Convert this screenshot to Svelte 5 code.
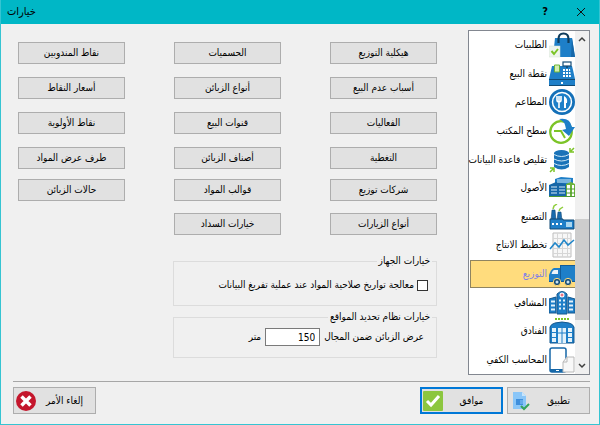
<script lang="ts">
  // Options dialog: section list on the right, distribution settings beside it.
  const sections = [
    { id: "orders", label: "الطلبيات" },
    { id: "pos", label: "نقطة البيع" },
    { id: "restaurants", label: "المطاعم" },
    { id: "desktop", label: "سطح المكتب" },
    { id: "database", label: "تقليص قاعدة البيانات" },
    { id: "assets", label: "الأصول" },
    { id: "manufacturing", label: "التصنيع" },
    { id: "planning", label: "تخطيط الانتاج" },
    { id: "distribution", label: "التوزيع" },
    { id: "hospitals", label: "المشافي" },
    { id: "hotels", label: "الفنادق" },
    { id: "pocket", label: "المحاسب الكفي" },
  ];

  // one array per column, first column is the rightmost
  const columns = [
    ["هيكلية التوزيع", "أسباب عدم البيع", "الفعاليات", "التغطية", "شركات توزيع", "أنواع الزيارات"],
    ["الحسميات", "أنواع الزبائن", "قنوات البيع", "أصناف الزبائن", "قوالب المواد", "خيارات السداد"],
    ["نقاط المندوبين", "أسعار النقاط", "نقاط الأولوية", "طرف عرض المواد", "حالات الزبائن"],
  ];

  let selected = $state("distribution");
  let fixDates = $state(false);
  let range = $state("150");
</script>

{#snippet icon(id: string)}
  <svg class="icon" viewBox="0 0 26 26" aria-hidden="true">
    {#if id === "orders"}
      <path d="M6 6h17l3 19H4z" fill="#1e7fc8" />
      <path d="M23 6l3 19h-4z" fill="#1667a8" />
      <path d="M9.500 11V7q0-5.500 5-5.500t5 5.500v4" fill="none" stroke="#103c5c" stroke-width="2.200" />
      <rect y="14" width="11" height="11" fill="#eef5ee" stroke="#d5e3d5" stroke-width="0.500" />
      <path d="M2.500 19l2.500 3 4-5" fill="none" stroke="#7cc427" stroke-width="2" />
    {:else if id === "pos"}
      <path d="M3 5h20l1 4 2 9v7H0v-7z" fill="#1e7fc8" />
      <rect x="14" y="1" width="8" height="4" fill="#fff" stroke="#174e78" stroke-width="1.200" />
      <path d="M18 5v2" stroke="#174e78" stroke-width="2" />
      <path d="M5.500 4h5v7h-5z" fill="#d3eeb2" stroke="#6db33a" />
      <path d="M14 8h7l1 8h-8z" fill="#fff" />
      <path d="M13 10.500h9M13 13.500h9M16.500 8v8M19.500 8v8" stroke="#1e7fc8" />
      <path d="M0 18.500h26M0 24.500h26" stroke="#104a75" />
      <rect x="12" y="21" width="2" height="2" fill="#fff" />
    {:else if id === "restaurants"}
      <circle cx="13" cy="13" r="13" fill="#1470b8" />
      <circle cx="13" cy="13" r="9.500" fill="#1e7fc8" stroke="#fff" stroke-width="1.500" />
      <path d="M8 7v4q0 2 2 2t2-2V7M10 7v12" fill="none" stroke="#fff" stroke-width="1.600" />
      <path d="M15 7q4 2 3 7h-1v5h-2z" fill="#fff" />
    {:else if id === "desktop"}
      <circle cx="12" cy="14" r="10.800" fill="#fff" stroke="#7cc427" stroke-width="2.200" />
      <path d="M5 13h7l4 7" fill="none" stroke="#7cc427" stroke-width="2" />
      <path d="M10 1q11-2 13 8h3l-6 9-7-6 4-1q-1-8-7-10z" fill="#1e7fc8" />
    {:else if id === "database"}
      <path d="M5 6v14q7.500 5 15 0V6z" fill="#1a73b8" />
      <ellipse cx="12.500" cy="6" rx="7.500" ry="3" fill="#1a73b8" />
      <path d="M5 7.500q7.500 4 15 0M5 12q7.500 4 15 0M5 16.500q7.500 4 15 0" fill="none" stroke="#cfe8f6" />
      <path d="M25 1l-3 3M21 1v4h4M1 25l3-3M1 21h4v4" fill="none" stroke="#7cc427" stroke-width="1.500" />
    {:else if id === "assets"}
      <path d="M6 4l6-2 12 1v8H6z" fill="#1e7fc8" />
      <path d="M0 10l7-3 11 2v13H0z" fill="#1667a8" />
      <path d="M8 5h14M8 7h14M2 12h6M2 15h6M2 18h6M10 12h6M10 15h6M10 18h6" stroke="#d6ecf8" />
      <path d="M17 9l5-2 4 2v13h-9z" fill="#6db33a" />
      <path d="M18 10h3v11h-3zM23 10h2v11h-2z" fill="#fff" />
      <path d="M17 14h9M17 18h9M0 21.500h26" stroke="#4f9a34" />
    {:else if id === "manufacturing"}
      <path d="M3 6h3l1 11H2zM9 8h3l1 9H8z" fill="#1a6cae" stroke="#124a75" stroke-width="0.600" />
      <path d="M4 5l1-3 3-2M10 7l1-2 3-2" fill="none" stroke="#8fce3c" stroke-width="1.500" />
      <path d="M1 15h13v1h11v9H1z" fill="#1e7fc8" stroke="#124a75" />
      <path d="M3 19h2v2H3zM7 19h2v2H7zM11 19h2v2h-2z" fill="#fff" />
      <rect x="17" y="18" width="6" height="5" fill="#a9d6ef" />
    {:else if id === "planning"}
      <path d="M4 1h18v24H4z" fill="#f7f7f7" stroke="#bdbdbd" />
      <path d="M4 6.500h18M4 11.500h18M4 16.500h18M4 21.500h18M8.500 1v24M13.500 1v24M18.500 1v24" stroke="#d6d6d6" />
      <path d="M1 17l5-6 4 4 5-7 4 5 6-5" fill="none" stroke="#2186c9" stroke-width="1.600" />
    {:else if id === "distribution"}
      <path d="M11 4h15v17H11z" fill="#1e7fc8" />
      <path d="M0 21v-7q2-6 5-7h7v14z" fill="#1e7fc8" />
      <path d="M2.500 13q1-4 3-4H9v4z" fill="#eaf4fa" />
      <path d="M11.500 4v16M11 4.500h15M0 20.500h26" stroke="#135c98" />
      <circle cx="8" cy="21" r="3.700" fill="#174e78" stroke="#ffdc7d" />
      <circle cx="19" cy="21" r="3.700" fill="#174e78" stroke="#ffdc7d" />
      <circle cx="8" cy="21" r="1.500" fill="#c9e3f2" />
      <circle cx="19" cy="21" r="1.500" fill="#c9e3f2" />
    {:else if id === "hospitals"}
      <path d="M0 9l7-2v16H0zM26 9l-7-2v16h7z" fill="#1e7fc8" stroke="#14588f" />
      <path d="M8 4q5-5 10 0v20H8z" fill="#1e7fc8" stroke="#14588f" />
      <circle cx="13" cy="5" r="2.500" fill="#fff" />
      <path d="M13 3.500v3M11.500 5h3" stroke="#e2475c" />
      <path d="M10 10.500h2M14 10.500h2M10 14.500h2M14 14.500h2M10 18.500h2M14 18.500h2M2 11.500h4M2 15.500h4M2 19.500h4M20 11.500h4M20 15.500h4M20 19.500h4" stroke="#e4f2fa" stroke-width="2" />
    {:else if id === "hotels"}
      <path d="M6 1h2M9 1h2M12 1h2M15 1h2M18 1h2" stroke="#7cc427" stroke-width="2" />
      <path d="M1 25V9q1-3 5-4 7-2 14 0 4 1 5 4v16z" fill="#1e7fc8" stroke="#14588f" />
      <path d="M3 10h4v4H3zM3 15h4v4H3zM3 20h4v4H3zM19 10h4v4h-4zM19 15h4v4h-4zM19 20h4v4h-4zM9 10h8v15H9z" fill="#e4f2fa" />
      <path d="M13 10v15M9 15h8" stroke="#1e7fc8" />
    {:else}
      <rect x="1" y="1" width="16" height="24" rx="2" fill="#fff" stroke="#1667a8" stroke-width="1.500" />
      <path d="M1 22h16v3H1z" fill="#1667a8" />
      <rect x="7" y="23" width="3" height="1" fill="#fff" />
      <path d="M14 15l4-5h7v15H14z" fill="#f8f8f8" stroke="#b8b8b8" />
      <path d="M14 15h4v-5" fill="none" stroke="#b8b8b8" />
    {/if}
  </svg>
{/snippet}

<div class="dialog" role="dialog" aria-labelledby="dialog-title">
  <header class="titlebar">
    <h1 id="dialog-title">خيارات</h1>
    <button class="caption" aria-label="مساعدة">?</button>
    <button class="caption" aria-label="إغلاق">
      <svg class="close" viewBox="0 0 8 8"><path d="M0 0l8 8M8 0L0 8" /></svg>
    </button>
  </header>

  <main class="content" dir="rtl">
    <nav class="list">
      <div class="scrollbar">
        <svg class="arrow" viewBox="0 0 6 4"><path d="M0 4l3-3 3 3" /></svg>
        <div class="track"><div class="thumb"></div></div>
        <svg class="arrow" viewBox="0 0 6 4"><path d="M0 0l3 3 3-3" /></svg>
      </div>
      <ul>
        {#each sections as s (s.id)}
          <li>
            <button class="item" class:selected={selected === s.id} onclick={() => (selected = s.id)}>
              {@render icon(s.id)}
              <span>{s.label}</span>
            </button>
          </li>
        {/each}
      </ul>
    </nav>

    <div class="panel">
      <div class="columns">
        {#each columns as column}
          <div class="column">
            {#each column as label (label)}
              <button class="push">{label}</button>
            {/each}
          </div>
        {/each}
      </div>

      <div class="groups">
        <fieldset>
          <legend>خيارات الجهاز</legend>
          <label class="check">
            <input type="checkbox" bind:checked={fixDates} />
            معالجة تواريخ صلاحية المواد عند عملية تفريغ البيانات
          </label>
        </fieldset>
        <fieldset>
          <legend>خيارات نظام تحديد المواقع</legend>
          <div class="range">
            <label for="range">عرض الزبائن ضمن المجال</label>
            <input id="range" type="text" bind:value={range} />
            <span>متر</span>
          </div>
        </fieldset>
      </div>
    </div>
  </main>

  <footer dir="rtl">
    <button class="action">
      <span>تطبيق</span>
      <svg class="glyph" viewBox="0 0 20 20">
        <path d="M3 1h9l4 4v13H3z" fill="#8ac6f8" />
        <path d="M12 1l4 4h-4z" fill="#c8e5fc" />
        <path d="M6 8h7v6H6z" fill="#3f8fdc" />
        <path d="M10 10h3M10 12h3" stroke="#8ac6f8" />
        <path d="M11 15l3 3 5-5" fill="none" stroke="#36a35a" stroke-width="2" />
      </svg>
    </button>
    <button class="action primary">
      <span>موافق</span>
      <svg class="glyph" viewBox="0 0 20 20">
        <rect width="20" height="20" rx="1" fill="#8cc63f" />
        <path d="M4 10l4 4 8-9" fill="none" stroke="#fff" stroke-width="3" />
      </svg>
    </button>
    <button class="action cancel">
      <span>إلغاء الأمر</span>
      <svg class="glyph" viewBox="0 0 20 20">
        <circle cx="10" cy="10" r="10" fill="#c4162c" />
        <path d="M5.500 5.500l9 9M14.500 5.500l-9 9" stroke="#fff" stroke-width="3.500" />
      </svg>
    </button>
  </footer>
</div>

<style>
  :global(body) {
    margin: 0;
  }
  .dialog {
    box-sizing: border-box;
    display: flex;
    flex-direction: column;
    min-height: 100vh;
    background: #f0f0f0;
    border: 1px solid #35c4d2;
    border-top: 0;
    color: #000;
    font: 10px/14px "DejaVu Sans Condensed", Tahoma, sans-serif;
  }
  button,
  input {
    box-sizing: border-box;
    margin: 0;
    font: inherit;
    color: inherit;
  }
  .titlebar {
    display: flex;
    align-items: center;
    height: 24px;
    padding: 0 4px 0 6px;
    background: #00b7c6;
  }
  h1 {
    flex: 1;
    margin: 0;
    font-size: 11px;
    line-height: 24px;
    font-weight: 400;
  }
  .caption {
    display: flex;
    align-items: center;
    justify-content: center;
    width: 28px;
    height: 24px;
    margin-left: 8px;
    padding: 0;
    border: 0;
    background: none;
    font-size: 11px;
    font-weight: 700;
  }
  .close {
    width: 8px;
    height: 8px;
    overflow: visible;
    stroke: #111;
  }
  .content {
    flex: 1;
    display: flex;
    gap: 31px;
    padding: 6px 9px 6px 17px;
  }
  .list {
    display: flex;
    flex: none;
    box-sizing: border-box;
    width: 122px;
    padding-left: 1px;
    border: 1px solid #828790;
    background: #fff;
  }
  .scrollbar {
    flex: none;
    display: flex;
    flex-direction: column;
    align-items: center;
    gap: 6px;
    width: 14px;
    padding: 6px 0;
    background: #f0f0f0;
  }
  .arrow {
    width: 6px;
    height: 4px;
    overflow: visible;
    fill: none;
    stroke: #404040;
    stroke-width: 1.5;
  }
  .track {
    flex: 1;
    display: flex;
    flex-direction: column;
    align-self: stretch;
    justify-content: flex-end;
    padding-bottom: 38px;
  }
  .thumb {
    height: 37%;
    background: #cdcdcd;
  }
  ul {
    flex: 1;
    min-width: 0;
    display: grid;
    grid-auto-rows: 1fr;
    margin: 0;
    padding: 0;
    list-style: none;
  }
  li {
    display: flex;
    min-width: 0;
  }
  .item {
    flex: 1;
    min-width: 0;
    display: flex;
    align-items: center;
    gap: 2px;
    padding: 0;
    border: 1px solid transparent;
    border-right: 0;
    background: none;
    white-space: nowrap;
  }
  .item.selected {
    border-color: #8f8460;
    background: #ffdc7d;
    color: #8080e8;
  }
  .icon {
    flex: none;
    width: 26px;
    height: 26px;
  }
  .panel {
    flex: 1;
    display: flex;
    flex-direction: column;
    gap: 20px;
    padding-top: 12px;
  }
  .columns {
    display: grid;
    grid-template-columns: repeat(3, 1fr);
    gap: 49px;
  }
  .column {
    display: grid;
    grid-template-rows: 35px 35px 35px 32px 34px 21px;
    align-items: start;
  }
  .push {
    height: 22px;
    padding: 0;
    border: 1px solid #adadad;
    background: #e1e1e1;
  }
  .groups {
    display: flex;
    flex-direction: column;
    gap: 4px;
    width: 63%;
  }
  fieldset {
    min-width: 0;
    margin: 0;
    padding: 9px 8px 12px;
    border: 1px solid #dcdcdc;
  }
  fieldset + fieldset {
    padding: 4px 12px 11px;
  }
  legend {
    margin-right: -4px;
    padding: 0 2px;
  }
  fieldset + fieldset legend {
    margin-right: -8px;
  }
  .check {
    display: flex;
    align-items: center;
    gap: 3px;
    height: 16px;
    white-space: nowrap;
  }
  .check input {
    appearance: none;
    width: 11px;
    height: 11px;
    border: 1px solid #333;
    background: #fff;
  }
  .check input:checked {
    background: #333;
  }
  .range {
    display: flex;
    align-items: center;
    gap: 4px;
    white-space: nowrap;
  }
  .range input {
    width: 55px;
    height: 18px;
    padding: 0 4px;
    border: 1px solid #7a7a7a;
    background: #fff;
  }
  footer {
    display: flex;
    gap: 4px;
    margin: 0 9px 0 12px;
    padding: 5px 0 10px;
    border-top: 1px solid #a6a6a6;
  }
  .action {
    display: flex;
    align-items: center;
    width: 83px;
    height: 27px;
    padding: 0 2px;
    border: 1px solid #adadad;
    background: #e1e1e1;
  }
  .action span {
    flex: 1;
    white-space: nowrap;
  }
  .action.primary {
    border: 2px solid #0078d7;
    padding: 0 1px;
  }
  .action.cancel {
    margin-right: auto;
  }
  .glyph {
    flex: none;
    width: 20px;
    height: 20px;
  }
</style>
